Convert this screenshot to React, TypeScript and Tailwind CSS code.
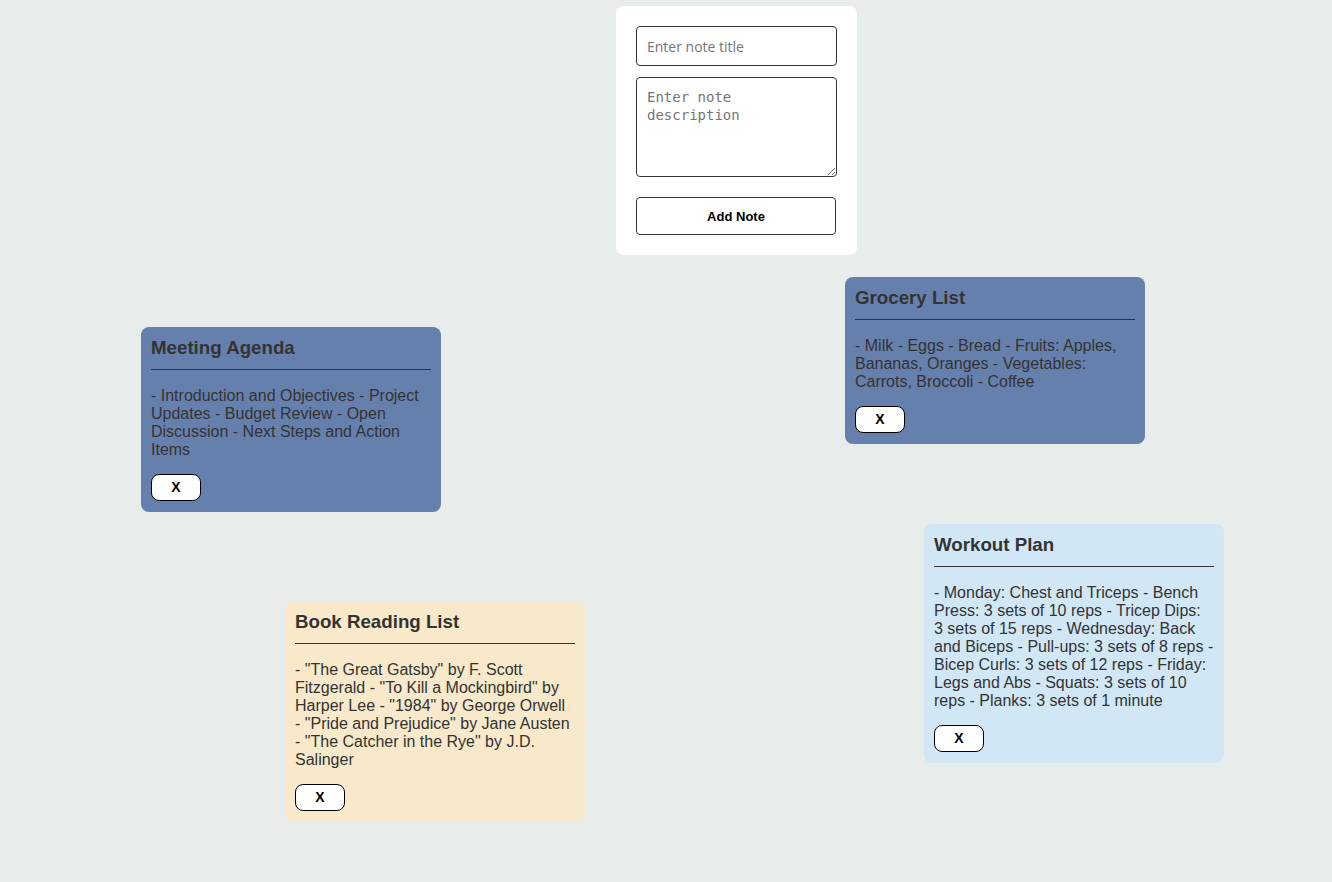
import React from 'react'

type Note = {
  title: string
  body: React.ReactNode
  bg: string
  pos: string
}

const notes: Note[] = [
  {
    title: 'Meeting Agenda',
    body: '- Introduction and Objectives - Project Updates - Budget Review - Open Discussion - Next Steps and Action Items',
    bg: 'bg-[#6680ad]',
    pos: 'left-[141px] top-[327px]',
  },
  {
    title: 'Grocery List',
    body: '- Milk - Eggs - Bread - Fruits: Apples, Bananas, Oranges - Vegetables: Carrots, Broccoli - Coffee',
    bg: 'bg-[#6680ad]',
    pos: 'left-[845px] top-[277px]',
  },
  {
    title: 'Book Reading List',
    // dash kept together with the next title, like the original wrap
    body: (
      <>
        - "The Great Gatsby" by F. Scott Fitzgerald - "To Kill a Mockingbird" by Harper Lee - "1984" by George Orwell{' '}
        <span className="whitespace-nowrap">- "Pride</span> and Prejudice" by Jane Austen{' '}
        <span className="whitespace-nowrap">- "The</span> Catcher in the Rye" by J.D. Salinger
      </>
    ),
    bg: 'bg-[#f7e9c9]',
    pos: 'left-[285px] top-[601px]',
  },
  {
    title: 'Workout Plan',
    body: '- Monday: Chest and Triceps - Bench Press: 3 sets of 10 reps - Tricep Dips: 3 sets of 15 reps - Wednesday: Back and Biceps - Pull-ups: 3 sets of 8 reps - Bicep Curls: 3 sets of 12 reps - Friday: Legs and Abs - Squats: 3 sets of 10 reps - Planks: 3 sets of 1 minute',
    bg: 'bg-[#d1e7f5]',
    pos: 'left-[924px] top-[524px]',
  },
]

function NoteCard({ note }: { note: Note }) {
  return (
    <div className={`absolute ${note.pos} ${note.bg} w-[300px] rounded-lg px-[10px] pt-[10px] pb-[11px] text-[#333]`}>
      <h3 className="text-[18.72px] font-bold leading-[22px] pb-[10px] border-b border-[#333]">{note.title}</h3>
      <p className="text-[16px] leading-[18px] mt-[17px] mb-[15px]">{note.body}</p>
      <button className="w-[50px] h-[27px] bg-white border border-black rounded-lg text-[14px] font-bold text-black">
        X
      </button>
    </div>
  )
}

export default function App() {
  return (
    <div
      className="relative h-[882px] bg-[#e8edeb] overflow-hidden"
      style={{ fontFamily: '"Liberation Sans", Arial, sans-serif' }}
    >
      <div className="pt-[6px] pl-[616px]">
        <form className="w-[241px] bg-white rounded-lg p-5 flex flex-col">
          <input
            placeholder="Enter note title"
            className="h-10 w-[201px] border border-[#333] rounded px-[10px] text-[14px] placeholder:text-[#757575] outline-none"
            style={{ fontFamily: '"Open Sans", "Noto Sans", sans-serif' }}
          />
          <textarea
            placeholder="Enter note description"
            className="mt-[11px] h-[100px] w-[201px] border border-[#333] rounded px-[10px] pt-[10px] pb-2 text-[14px] leading-[18px] placeholder:text-[#757575] outline-none"
            style={{ fontFamily: '"DejaVu Sans Mono", "Liberation Mono", monospace' }}
          />
          <button
            type="button"
            className="mt-5 h-[38px] w-[200px] border border-[#333] rounded bg-white text-[13px] leading-[16px] pt-[2px] font-bold text-black"
          >
            Add Note
          </button>
        </form>
      </div>
      {notes.map((n) => (
        <NoteCard key={n.title} note={n} />
      ))}
    </div>
  )
}
